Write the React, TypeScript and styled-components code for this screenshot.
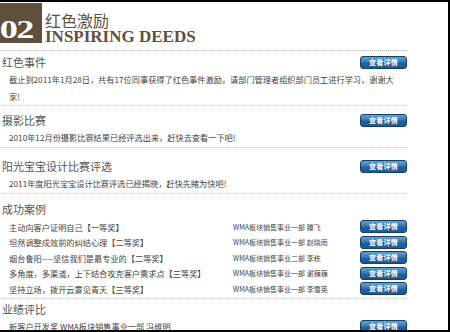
import React from "react";
import styled, { createGlobalStyle } from "styled-components";

const GlobalStyle = createGlobalStyle`
  html, body { margin: 0; padding: 0; background: #fff; }
  body { font-family: "Noto Sans CJK SC", "Noto Sans", sans-serif; }
`;

const Frame = styled.div`
  width: 450px;
  height: 332px;
  box-sizing: border-box;
  border-top: 2px solid #000;
  border-right: 2px solid #000;
  border-bottom: 2px solid #000;
  overflow: hidden;
  background: #fff;
`;

const Column = styled.div`
  width: 407px;
`;

const Header = styled.header`
  display: flex;
  align-items: flex-end;
  gap: 3px;
  padding: 1px 0 7px;
  border-bottom: 1px dotted #b8b8b8;
`;

const LogoBlock = styled.div`
  width: 42px;
  height: 40px;
  background: #5e503c;
  overflow: hidden;
  display: flex;
  align-items: flex-end;
  justify-content: flex-end;
  padding: 0 9px 3px 0;
  box-sizing: border-box;
`;

const LogoDigits = styled.span`
  font-family: "Liberation Serif", serif;
  font-weight: bold;
  font-size: 25px;
  line-height: 20px;
  color: #fff;
  letter-spacing: -1px;
  transform: scaleX(1.45);
  transform-origin: right bottom;
`;

const Titles = styled.div`
  display: flex;
  flex-direction: column;
`;

const TitleCn = styled.h1`
  margin: 0 0 2px;
  font-size: 16px;
  line-height: 18px;
  font-weight: normal;
  color: #5e503c;
`;

const TitleEn = styled.div`
  font-family: "Liberation Serif", serif;
  font-weight: bold;
  font-size: 17px;
  line-height: 12px;
  color: #5e503c;
`;

const Section = styled.section<{ $pt: number; $pb?: number }>`
  padding: ${(p) => p.$pt}px 0 ${(p) => p.$pb ?? 0}px;
  border-bottom: 1px dotted #c4c4c4;
`;

const HeadRow = styled.div`
  display: flex;
  align-items: center;
  justify-content: space-between;
  height: 15px;
`;

const Heading = styled.h2`
  margin: 0;
  padding-left: 2px;
  font-size: 11px;
  line-height: 15px;
  font-weight: normal;
  color: #555;
`;

const Body = styled.p`
  margin: 1px 0 0;
  padding: 0 11px 0 9px;
  font-size: 8.2px;
  line-height: 17px;
  color: #444;
`;

const Rows = styled.div`
  margin-top: 2px;
`;

const Row = styled.div`
  display: flex;
  align-items: center;
  height: 15.5px;
  padding-left: 9px;
`;

const RowTitle = styled.span<{ $wide?: boolean }>`
  width: ${(p) => (p.$wide ? "auto" : "224px")};
  flex: ${(p) => (p.$wide ? "1" : "none")};
  font-size: 8.2px;
  color: #444;
  white-space: nowrap;
`;

const RowMeta = styled.span`
  flex: 1;
  font-size: 7px;
  color: #444;
  white-space: nowrap;
`;

const Button = styled.button`
  flex: none;
  width: 47px;
  height: 13px;
  padding: 0;
  margin: 0;
  border: 1px solid #163f6c;
  border-radius: 3px;
  background: linear-gradient(#5ea2d6 0%, #3478b6 45%, #225f9e 55%, #1e5894 100%);
  color: #fff;
  font-family: "Noto Sans CJK SC", sans-serif;
  font-size: 7px;
  line-height: 11px;
  font-weight: bold;
  letter-spacing: 0.3px;
  cursor: pointer;
`;

const cases = [
  { t: "主动向客户证明自己【一等奖】", m: "WMA板块销售事业一部 滕飞" },
  { t: "坦然调整成效前的纠结心理【二等奖】", m: "WMA板块销售事业一部 赵晓雨" },
  { t: "烟台鲁阳----坚信我们是最专业的【二等奖】", m: "WMA板块销售事业二部 李栋" },
  { t: "多角度，多渠道，上下结合攻克客户需求点【三等奖】", m: "WMA板块销售事业一部 谢巍巍" },
  { t: "坚持立场，拨开云雾见青天【三等奖】", m: "WMA板块销售事业一部 李雪英" },
];

export default function App() {
  return (
    <>
      <GlobalStyle />
      <Frame>
        <Column>
          <Header>
            <LogoBlock>
              <LogoDigits>02</LogoDigits>
            </LogoBlock>
            <Titles>
              <TitleCn>红色激励</TitleCn>
              <TitleEn>INSPIRING DEEDS</TitleEn>
            </Titles>
          </Header>

          <Section $pt={4}>
            <HeadRow>
              <Heading>红色事件</Heading>
              <Button>查看详情</Button>
            </HeadRow>
            <Body>
              截止到2011年1月28日，共有17位同事获得了红色事件激励，请部门管理者组织部门员工进行学习，谢谢大家!
            </Body>
          </Section>

          <Section $pt={7} $pb={1}>
            <HeadRow>
              <Heading>摄影比赛</Heading>
              <Button>查看详情</Button>
            </HeadRow>
            <Body>2010年12月份摄影比赛结果已经评选出来，赶快去查看一下吧!</Body>
          </Section>

          <Section $pt={11} $pb={1}>
            <HeadRow>
              <Heading>阳光宝宝设计比赛评选</Heading>
              <Button>查看详情</Button>
            </HeadRow>
            <Body>2011年度阳光宝宝设计比赛评选已经揭晓，赶快先睹为快吧!</Body>
          </Section>

          <Section $pt={8} $pb={1}>
            <HeadRow>
              <Heading>成功案例</Heading>
            </HeadRow>
            <Rows>
              {cases.map((c) => (
                <Row key={c.t}>
                  <RowTitle>{c.t}</RowTitle>
                  <RowMeta>{c.m}</RowMeta>
                  <Button>查看详情</Button>
                </Row>
              ))}
            </Rows>
          </Section>

          <Section $pt={3}>
            <HeadRow>
              <Heading>业绩评比</Heading>
            </HeadRow>
            <Rows>
              <Row>
                <RowTitle $wide>新客户开发奖 WMA板块销售事业一部 冯维明</RowTitle>
                <Button>查看详情</Button>
              </Row>
            </Rows>
          </Section>
        </Column>
      </Frame>
    </>
  );
}
